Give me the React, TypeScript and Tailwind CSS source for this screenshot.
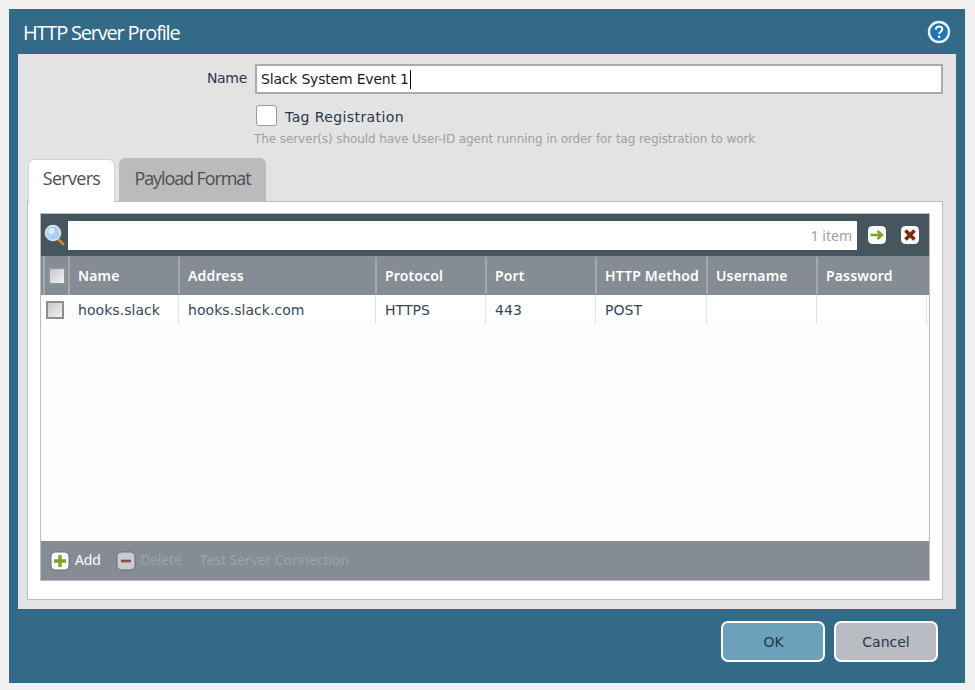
const cols = [
  { name: "Name", w: "w-[110px]", value: "hooks.slack" },
  { name: "Address", w: "w-[197px]", value: "hooks.slack.com" },
  { name: "Protocol", w: "w-[110px]", value: "HTTPS" },
  { name: "Port", w: "w-[110px]", value: "443" },
  { name: "HTTP Method", w: "w-[111px]", value: "POST" },
  { name: "Username", w: "w-[110px]", value: "" },
  { name: "Password", w: "w-[110px]", value: "" },
];

function Check({ className }: { className: string }) {
  return (
    <span className={`block h-[18px] w-[18px] bg-gradient-to-br from-[#c4c6c8] to-[#f2f2f2] ${className}`} />
  );
}

function HelpIcon() {
  return (
    <svg width="24" height="24" viewBox="0 0 24 24" aria-hidden="true">
      <circle cx="12" cy="12" r="10" fill="#1b77ad" stroke="#e6f2f8" strokeWidth="2.4" />
      <path d="M8.8 9.6c.2-2 1.5-3 3.3-3s3.2 1 3.2 2.7c0 2.5-3.2 2.4-3.2 4.7" fill="none" stroke="#fff" strokeWidth="2" />
      <circle cx="12.1" cy="16.8" r="1.3" fill="#fff" />
    </svg>
  );
}

function SearchIcon() {
  return (
    <svg width="22" height="24" viewBox="0 0 22 24" aria-hidden="true">
      <path d="M13 15l6 6" stroke="#c98838" strokeWidth="3" strokeLinecap="round" />
      <circle cx="9" cy="10" r="7.5" fill="#a9d0ee" stroke="#d8e8f4" strokeWidth="1.5" />
      <circle cx="7.5" cy="8" r="3" fill="#dcecf8" />
    </svg>
  );
}

function ActionIcon({ kind, muted }: { kind: "arrow" | "close" | "plus" | "minus"; muted?: boolean }) {
  return (
    <svg width="20" height="20" viewBox="0 0 20 20" aria-hidden="true" className="shrink-0">
      <rect x="1" y="1" width="18" height="18" rx="4.5" fill={muted ? "#c9cbce" : "#fbfcfa"} stroke={kind === "plus" || kind === "minus" ? "#5f7180" : "none"} />
      {kind === "arrow" && <path d="M3.5 10h11M10.5 6l4.5 4-4.5 4" fill="none" stroke="#84a02c" strokeWidth="2.4" />}
      {kind === "close" && <path d="M5.5 5.5l9 9M14.5 5.5l-9 9" stroke="#7a2a12" strokeWidth="3.6" />}
      {kind === "plus" && <path d="M10 4v12M4 10h12" stroke="#84a02c" strokeWidth="3.4" />}
      {kind === "minus" && <path d="M5 10h10" stroke="#8a5040" strokeWidth="2.6" />}
    </svg>
  );
}

export default function App() {
  return (
    <div className="h-[690px] w-[975px] overflow-hidden bg-[#f0f1f0] p-[9px] font-['DejaVu_Sans',sans-serif]">
      <div className="flex h-[674px] w-[956px] flex-col bg-[#326a88] px-[9px]">
        <header className="flex h-[45px] shrink-0 items-center justify-between pl-[5px] pr-[5px]">
          <h1 className="pt-[3px] font-['Open_Sans',sans-serif] text-[20px] leading-none tracking-[-1.2px] text-white">HTTP Server Profile</h1>
          <HelpIcon />
        </header>

        <main className="h-[555px] shrink-0 bg-[#e3e3e3] pl-[9px] pr-[13px] pt-[10px]">
          <div className="flex h-[30px] items-center">
            <label className="w-[228px] pb-[2px] pr-[8px] text-right text-[14px] tracking-[-0.3px] text-[#2b3a4d]">Name</label>
            <div className="flex h-[30px] flex-1 items-center border-2 border-[#ababab] bg-white pl-[4px] text-[14px] tracking-[-0.2px] text-[#1a1a1a]">
              Slack System Event 1<span className="ml-px h-[19px] w-px bg-black" />
            </div>
          </div>

          <div className="ml-[228px] mt-[11px] flex h-[21px] items-center">
            <span className="ml-[1px] block h-[21px] w-[21px] rounded-[3px] border border-[#9b9b9b] bg-white" />
            <span className="ml-[8px] pt-[4px] text-[14px] tracking-[0.4px] text-[#27374b]">Tag Registration</span>
          </div>
          <p className="ml-[227px] mt-[5px] h-[16px] text-[12px] leading-[16px] tracking-[-0.09px] text-[#a0a0a0]">
            The server(s) should have User-ID agent running in order for tag registration to work
          </p>

          <div className="ml-[1px] mt-[11px] flex h-[44px] items-end">
            <div className="relative z-10 flex h-[43px] w-[87px] items-center justify-center rounded-t-[6px] border border-b-0 border-[#d2d2d2] bg-white pb-[6px] font-['Open_Sans',sans-serif] text-[18px] tracking-[-0.7px] text-[#4a4f54]">
              Servers
            </div>
            <div className="mb-px ml-[4px] flex h-[43px] w-[147px] items-center justify-center rounded-t-[6px] bg-[#bbbbbb] pb-[3px] font-['Open_Sans',sans-serif] text-[18px] tracking-[-1.1px] text-[#4a4f54]">
              Payload Format
            </div>
          </div>

          <section className="-mt-px h-[399px] border border-[#bdbdbd] bg-white px-[12px] pt-[11px]">
            <div className="flex h-[368px] w-[890px] flex-col border border-[#bcbcbc] bg-[#fcfdfd]">
              <div className="flex h-[42px] shrink-0 items-center bg-[#46565f] pl-[3px]">
                <span className="w-[24px]"><SearchIcon /></span>
                <div className="flex h-[29px] w-[789px] items-center justify-end bg-white pr-[5px] font-['Noto_Sans',sans-serif] text-[14px] text-[#9aa2a8]">1 item</div>
                <span className="ml-[10px]"><ActionIcon kind="arrow" /></span>
                <span className="ml-[13px]"><ActionIcon kind="close" /></span>
              </div>

              <div className="flex h-[39px] shrink-0 items-center bg-[#858c93] pl-[2px]">
                <div className="flex h-full w-[27px] items-center justify-center border-r-2 border-l-2 border-[#a3a9ae]">
                  <Check className="border-2 border-[#8d9499]" />
                </div>
                {cols.map((c, i) => (
                  <div
                    key={c.name}
                    className={`flex h-[37px] items-center pl-[8px] font-['Noto_Sans',sans-serif] text-[14px] font-semibold tracking-[0.15px] text-white ${c.w} ${i < 6 ? "border-r-2 border-[#a3a9ae]" : ""}`}
                  >
                    {c.name}
                  </div>
                ))}
              </div>

              <div className="flex h-[29px] shrink-0 items-center bg-white pl-[5px]">
                <div className="flex h-full w-[23px] items-center">
                  <Check className="border-2 border-[#8f8f8f]" />
                </div>
                {cols.map((c) => (
                  <div
                    key={c.name}
                    className={`flex h-full items-center border-r border-[#dfe4e8] pl-[9px] pt-[2px] text-[14px] tracking-[0.05px] text-[#36465a] ${c.w}`}
                  >
                    {c.value}
                  </div>
                ))}
              </div>

              <div className="flex-1" />

              <div className="flex h-[39px] shrink-0 items-center bg-[#858c93] pl-[9px] font-['Noto_Sans',sans-serif] text-[14px] tracking-[-0.1px]">
                <ActionIcon kind="plus" />
                <span className="ml-[5px] pb-[2px] text-white">Add</span>
                <span className="ml-[15px]"><ActionIcon kind="minus" muted /></span>
                <span className="ml-[4px] pb-[2px] text-[#9ca2a8]">Delete</span>
                <span className="ml-[18px] pb-[2px] tracking-[-0.08px] text-[#9ca2a8]">Test Server Connection</span>
              </div>
            </div>
          </section>
        </main>

        <footer className="flex flex-1 items-start justify-end gap-[9px] pr-[18px] pt-[12px]">
          <button className="h-[41px] w-[104px] rounded-[7px] border-2 border-white bg-[#6ca1bb] pl-[1px] pt-[2px] text-[14px] text-[#22384a]">OK</button>
          <button className="h-[41px] w-[104px] rounded-[7px] border-2 border-white bg-[#babcc4] pt-[2px] text-[14px] text-[#22384a]">Cancel</button>
        </footer>
      </div>
    </div>
  );
}
